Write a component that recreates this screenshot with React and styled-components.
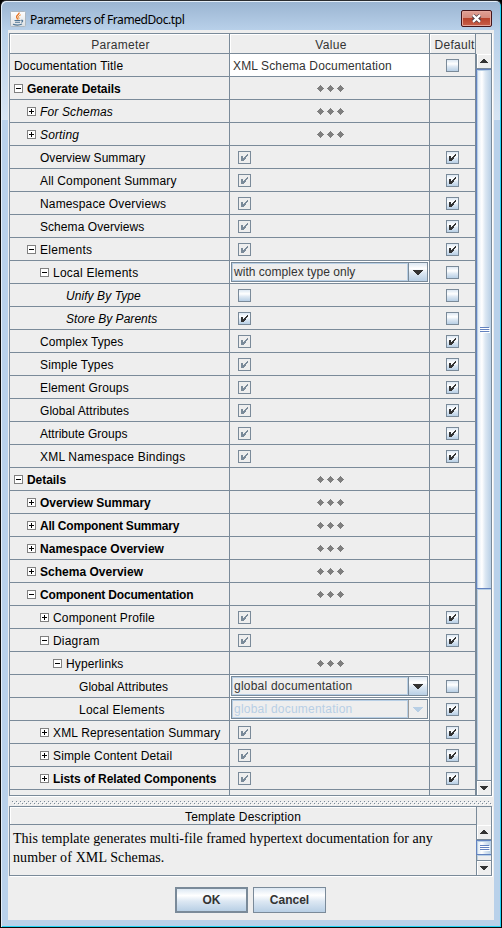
import React from 'react';
import styled, { createGlobalStyle, css } from 'styled-components';

const Global = createGlobalStyle`
  *, *::before, *::after { box-sizing: border-box; }
  body { margin: 0; background: #000; overflow: hidden; }
`;

const line = '#7a8a99';
const face = '#eeeeee';
const metal = 'linear-gradient(180deg, #dde8f3 0%, #ffffff 30%, #dde8f3 55%, #b8cfe5 100%)';

const Frame = styled.div`
  width: 502px;
  height: 928px;
  display: flex;
  flex-direction: column;
  padding: 0 7px 7px 7px;
  border: 1px solid #0a0a0a;
  border-top-color: #2a2c30;
  border-radius: 6px 6px 0 0;
  background: linear-gradient(180deg, #9ab4d1 0, #b9d1ea 30px, #d8e5f3 119px, #b9d1ea 119px, #b9d1ea 100%);
  box-shadow: inset 1px 1px 0 #e4eef8, inset -1px -1px 0 #22d3f5;
  font-family: "Liberation Sans", Arial, sans-serif;
  font-size: 12px;
  color: #000;
`;
const TitleBar = styled.header`
  height: 29px;
  flex: none;
  display: flex;
  align-items: center;
  padding: 6px 2px 0 2px;
`;
const Title = styled.h1`
  flex: 1;
  margin: 0 0 0 4px;
  font: 400 12px/16px "Noto Sans", sans-serif;
  letter-spacing: -0.42px;
  padding-top: 2px;
`;
const CloseButton = styled.button`
  width: 31px;
  height: 17px;
  margin-top: -1px;
  padding: 0;
  display: grid;
  place-items: center;
  border: 1px solid #45151a;
  border-radius: 2px;
  box-shadow: inset 0 0 0 1px #e5a79c;
  background: linear-gradient(180deg, #e0a095 0, #d58a7c 48%, #b8432c 50%, #c8604a 100%);
`;
const Content = styled.main`
  flex: 1;
  min-height: 0;
  display: flex;
  flex-direction: column;
  padding: 3px 1px 0;
  background: ${face};
`;
const Panel = styled.section`
  width: 483px;
  flex: none;
  display: flex;
  border: 1px solid ${line};
  box-shadow: 1px 1px 0 #fff;
  height: ${p => p.$h}px;
`;
const Body = styled.div`
  width: 466px;
  flex: none;
  overflow: hidden;
`;
const Grid = styled.div`
  display: grid;
  grid-template-columns: 220px 200px 46px;
  grid-auto-rows: 23px;
  grid-template-rows: 20px;
`;
const Cell = styled.div`
  display: flex;
  align-items: center;
  min-width: 0;
  border-right: 1px solid ${line};
  border-bottom: 1px solid ${line};
  white-space: nowrap;
`;
const HeadCell = styled(Cell)`
  justify-content: center;
  color: #333;
  padding: 2px 0 0 ${p => p.$shift || 0}px;
  letter-spacing: 0.3px;
  box-shadow: inset 1px 1px 0 #fff;
`;
const NameCell = styled(Cell)`
  padding-left: ${p => p.$x}px;
`;
const Label = styled.span`
  line-height: 14px;
  padding-top: 1px;
  font-weight: ${p => (p.$style.includes('b') ? 700 : 400)};
  font-style: ${p => (p.$style.includes('i') ? 'italic' : 'normal')};
  letter-spacing: ${p => p.$ls}px;
`;
const Toggle = styled.svg`
  width: 9px;
  height: 9px;
  flex: none;
  margin-right: 4px;
`;
const ValueCell = styled(Cell)`
  padding-left: 8px;
`;
const CenterCell = styled(Cell)`
  justify-content: center;
`;
const MoreCell = styled(CenterCell)`
  padding-left: 2px;
`;
const TextCell = styled(Cell)`
  background: #fff;
  padding: 1px 0 0 3px;
  color: #333;
  letter-spacing: 0.13px;
`;
const ComboCell = styled(Cell)`
  background: #fff;
  padding: 1px;
`;
const Combo = styled.div`
  width: 197px;
  height: 20px;
  display: flex;
  background: ${face};
  border: 1px solid ${line};
  color: ${p => (p.$off ? '#b8cfe5' : '#333')};
`;
const ComboText = styled.div`
  flex: 1;
  border: 1px solid #b8cfe5;
  line-height: 16px;
  padding-left: 1px;
  letter-spacing: ${p => p.$ls}px;
`;
const ComboButton = styled.div`
  width: 19px;
  display: grid;
  place-items: center;
  border-left: 1px solid ${p => (p.$off ? '#999' : line)};
  background: ${p => (p.$off ? face : metal)};
`;
const Box = styled.span`
  width: 13px;
  height: 13px;
  flex: none;
  display: block;
  border: 1px solid ${line};
  ${p => !p.$off && css`background: linear-gradient(180deg, #dde8f3 0, #fff 35%, #dde8f3 60%, #b8cfe5 100%);`}
  svg { display: block; }
`;
const Scroll = styled.div`
  width: 15px;
  flex: none;
  display: flex;
  flex-direction: column;
  border-left: 1px solid ${line};
`;
const Corner = styled.div`
  height: ${p => p.$h}px;
  flex: none;
  ${p => p.$bare && css`margin-left: -1px; background: ${face};`}
`;
const ScrollButton = styled.div`
  height: 15px;
  flex: none;
  display: grid;
  place-items: center;
  box-shadow: inset 1px 1px 0 #fff;
  border-${p => p.$side}: 1px solid ${line};
`;
const Thumb = styled.div`
  height: ${p => p.$h}px;
  flex: none;
  margin-left: -1px;
  display: flex;
  flex-direction: column;
  justify-content: center;
  align-items: center;
  gap: 1px;
  border: 1px solid #6382bf;
  border-right: 0;
  box-shadow: inset 1px 1px 0 #b8cfe5;
  background: linear-gradient(90deg, #dde8f3 0, #fff 35%, #dde8f3 58%, #b8cfe5 100%);
`;
const Grip = styled.i`
  width: 9px;
  height: 1px;
  background: #6382bf;
  box-shadow: 1px 1px 0 #fff;
`;
const Track = styled.div`
  flex: 1;
  box-shadow: inset 1px 1px 0 #b8cfe5;
`;
const Splitter = styled.div`
  height: 10px;
  flex: none;
  margin: 0 2px 0 3px;
  padding-top: 5px;
  svg { display: block; }
`;
const DescTitle = styled.h2`
  height: 18px;
  margin: 0;
  font: 400 12px/20px "Liberation Sans", sans-serif;
  letter-spacing: 0.2px;
  text-align: center;
  border-bottom: 1px solid ${line};
  box-shadow: inset 1px 1px 0 #fff;
`;
const Description = styled.p`
  margin: 4px 0 0 3px;
  font: 400 14px/19px "Liberation Serif", serif;
`;
const TextLine = styled.span`
  display: block;
  white-space: nowrap;
  letter-spacing: ${p => p.$ls}px;
`;
const Buttons = styled.footer`
  display: flex;
  gap: 5px;
  padding: 11px 0 0 166px;
`;
const Button = styled.button`
  width: ${p => p.$w}px;
  height: 26px;
  padding: 0;
  border: ${p => (p.$primary ? 2 : 1)}px solid ${line};
  background: ${metal};
  color: #333;
  font: 700 12px/20px "Liberation Sans", sans-serif;
`;

const Java = () => (
  <svg width="16" height="16" viewBox="0 0 16 16">
    <defs>
      <linearGradient id="jbg" x2="0" y2="1">
        <stop offset="0" stopColor="#fff" /><stop offset="1" stopColor="#dce0e3" />
      </linearGradient>
    </defs>
    <rect x=".5" y=".5" width="15" height="15" rx="1" fill="url(#jbg)" stroke="#aeb8c0" />
    <path d="M9 1.500c1 1.800-3 2.600-2.400 4.600.2.800 1 1.200.8 2.400" fill="none" stroke="#e7701c" strokeWidth="1.3" />
    <path d="M10.800 3.800C8.800 4.800 8 5.500 8.700 6.500c.5.800.2 1.500-.4 2" fill="none" stroke="#ef8a2c" strokeWidth="1" />
    <path d="M4.500 9.500h6M5 11.300h5M3 13.300c3 1 7 .8 9-.2M11 9.300c2.500-.5 2 1.700.2 2" fill="none" stroke="#4f7594" strokeWidth="1.100" />
  </svg>
);
const Check = ({ off }) => (
  <svg width="11" height="11" shapeRendering="crispEdges" fill={off ? line : '#333'}>
    <path d="M2 4h2v2h1V5h1V4h1V3h1V2h1v2H8v1H7v2H6v1H5v1H2z" />
  </svg>
);
const CheckBox = ({ on, off }) => <Box $off={off}>{on && <Check off={off} />}</Box>;
const Diamonds = () => (
  <svg width="27" height="7" fill="#7f7f7f" shapeRendering="crispEdges">
    {[0, 10, 20].map(x => (
      <path key={x} transform={`translate(${x})`} d="M3 0h1v1h1v1h1v1h1v1H6v1H5v1H4v1H3V6H2V5H1V4H0V3h1V2h1V1h1z" />
    ))}
  </svg>
);
const Expander = ({ open }) => (
  <Toggle shapeRendering="crispEdges">
    <rect x=".5" y=".5" width="8" height="8" fill="#fff" stroke="#808080" />
    <path d={open ? 'M2 4h5v1H2z' : 'M2 4h5v1H2zM4 2h1v5H4z'} />
  </Toggle>
);
const arrows = {
  wide: 'M0 0h10v1H9v1H8v1H7v1H6v1H4V4H3V3H2V2H1V1H0z',
  up: 'M3 0h2v1h1v1h1v1h1v1H0V3h1V2h1V1h1z',
  down: 'M0 0h8v1H7v1H6v1H5v1H3V3H2V2H1V1H0z',
};
const Arrow = ({ kind, color = '#333' }) => (
  <svg width={kind === 'wide' ? 10 : 8} height={kind === 'wide' ? 5 : 4} shapeRendering="crispEdges" fill={color}>
    <path d={arrows[kind]} />
  </svg>
);
const ScrollBar = ({ corner, thumb, bare }) => (
  <Scroll>
    <Corner $h={corner} $bare={bare} />
    <ScrollButton $side="bottom"><Arrow kind="up" /></ScrollButton>
    <Thumb $h={thumb}><Grip /><Grip /><Grip /></Thumb>
    <Track />
    <ScrollButton $side="top"><Arrow kind="down" /></ScrollButton>
  </Scroll>
);

/* name, indent level, toggle (+ / - / none), type style, value kind, default checked, letter spacing */
const rows = [
  ['Documentation Title', -1, '', '', 'text:XML Schema Documentation', false, 0.17],
  ['Generate Details', 0, '-', 'b', 'more', undefined, -0.07],
  ['For Schemas', 1, '+', 'i', 'more'],
  ['Sorting', 1, '+', 'i', 'more'],
  ['Overview Summary', 1, '', '', 'locked', true, 0.03],
  ['All Component Summary', 1, '', '', 'locked', true],
  ['Namespace Overviews', 1, '', '', 'locked', true],
  ['Schema Overviews', 1, '', '', 'locked', true, 0.06],
  ['Elements', 1, '-', '', 'locked', true, 0.3],
  ['Local Elements', 2, '-', '', 'combo:with complex type only', false, 0.24],
  ['Unify By Type', 3, '', 'i', 'off', false, 0.07],
  ['Store By Parents', 3, '', 'i', 'on', false, 0.03],
  ['Complex Types', 1, '', '', 'locked', true, 0.07],
  ['Simple Types', 1, '', '', 'locked', true],
  ['Element Groups', 1, '', '', 'locked', true],
  ['Global Attributes', 1, '', '', 'locked', true, 0.06],
  ['Attribute Groups', 1, '', '', 'locked', true, 0],
  ['XML Namespace Bindings', 1, '', '', 'locked', true, 0.2],
  ['Details', 0, '-', 'b', 'more', undefined, -0.05],
  ['Overview Summary', 1, '+', 'b', 'more', undefined, -0.04],
  ['All Component Summary', 1, '+', 'b', 'more', undefined, -0.2],
  ['Namespace Overview', 1, '+', 'b', 'more', undefined, 0.03],
  ['Schema Overview', 1, '+', 'b', 'more', undefined, 0.02],
  ['Component Documentation', 1, '-', 'b', 'more', undefined, -0.17],
  ['Component Profile', 2, '+', '', 'locked', true],
  ['Diagram', 2, '-', '', 'locked', true, 0.2],
  ['Hyperlinks', 3, '-', '', 'more'],
  ['Global Attributes', 4, '', '', 'combo:global documentation', false, 0.06],
  ['Local Elements', 4, '', '', 'dim:global documentation', true, 0.26],
  ['XML Representation Summary', 2, '+', '', 'locked', true],
  ['Simple Content Detail', 2, '+', '', 'locked', true],
  ['Lists of Related Components', 2, '+', 'b', 'locked', true, -0.1],
  ['', 0, '', '', ''],
];

const Value = ({ spec }) => {
  const [kind, text] = spec.split(':');
  if (kind === 'text') return <TextCell>{text}</TextCell>;
  if (kind === 'more') return <MoreCell><Diamonds /></MoreCell>;
  if (kind === 'combo' || kind === 'dim') {
    const off = kind === 'dim';
    return (
      <ComboCell>
        <Combo $off={off}>
          <ComboText $ls={text.startsWith('with') ? 0.03 : 0.22}>{text}</ComboText>
          <ComboButton $off={off}><Arrow kind="wide" color={off ? '#b8cfe5' : '#333'} /></ComboButton>
        </Combo>
      </ComboCell>
    );
  }
  return <ValueCell>{kind && <CheckBox on={kind !== 'off'} off={kind === 'locked'} />}</ValueCell>;
};

const Row = ({ row: [name, level, toggle, style, value, def, ls = 0.15] }) => (
  <>
    <NameCell $x={toggle ? 4 + level * 13 : 17 + level * 13}>
      {toggle && <Expander open={toggle === '-'} />}
      <Label $style={style} $ls={ls}>{name}</Label>
    </NameCell>
    <Value spec={value} />
    <CenterCell>{def !== undefined && <CheckBox on={def} />}</CenterCell>
  </>
);

export default function App() {
  return (
    <>
      <Global />
      <Frame>
        <TitleBar>
          <Java />
          <Title>Parameters of FramedDoc.tpl</Title>
          <CloseButton aria-label="Close">
            <svg width="11" height="9" viewBox="0 0 11 9">
              <path d="M2 1.500L9 7.500M9 1.500L2 7.500" stroke="#4c3c45" strokeWidth="4" />
              <path d="M2 1.100L9 7.900M9 1.100L2 7.900" stroke="#fff" strokeWidth="2.200" />
            </svg>
          </CloseButton>
        </TitleBar>
        <Content>
          <Panel $h={763}>
            <Body>
              <Grid>
                <HeadCell $shift={2}>Parameter</HeadCell>
                <HeadCell $shift={3}>Value</HeadCell>
                <HeadCell $shift={4}>Default</HeadCell>
                {rows.map((r, i) => <Row key={i} row={r} />)}
              </Grid>
            </Body>
            <ScrollBar corner={20} thumb={520} bare />
          </Panel>
          <Splitter>
            <svg width="480" height="4" shapeRendering="crispEdges">
              <defs>
                <pattern id="bumps" width="4" height="4" patternUnits="userSpaceOnUse">
                  <path d="M0 0h1v1H0zM2 2h1v1H2z" fill={line} />
                  <path d="M1 1h1v1H1zM3 3h1v1H3z" fill="#fff" />
                </pattern>
              </defs>
              <rect width="480" height="4" fill="url(#bumps)" />
            </svg>
          </Splitter>
          <Panel $h={70}>
            <Body>
              <DescTitle>Template Description</DescTitle>
              <Description>
                <TextLine $ls={0.01}>This template generates multi-file framed hypertext documentation for any</TextLine>
                <TextLine $ls={0.12}>number of XML Schemas.</TextLine>
              </Description>
            </Body>
            <ScrollBar corner={18} thumb={15} />
          </Panel>
          <Buttons>
            <Button $primary $w={73}>OK</Button>
            <Button $w={73}>Cancel</Button>
          </Buttons>
        </Content>
      </Frame>
    </>
  );
}
